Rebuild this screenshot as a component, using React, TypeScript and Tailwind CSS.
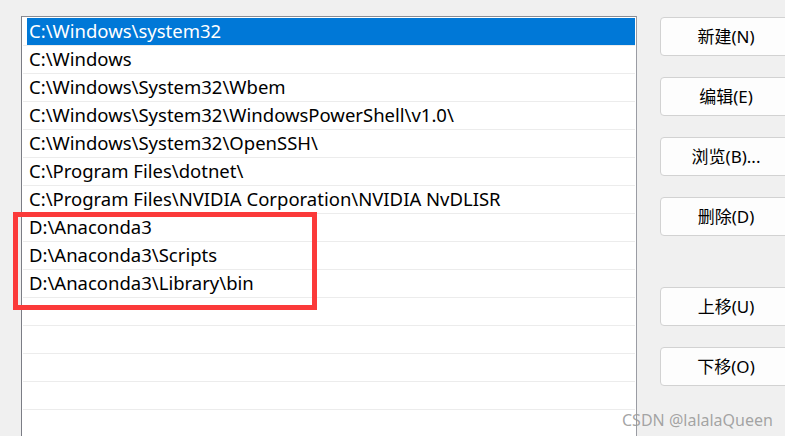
const paths = [
  "C:\\Windows\\system32",
  "C:\\Windows",
  "C:\\Windows\\System32\\Wbem",
  "C:\\Windows\\System32\\WindowsPowerShell\\v1.0\\",
  "C:\\Windows\\System32\\OpenSSH\\",
  "C:\\Program Files\\dotnet\\",
  "C:\\Program Files\\NVIDIA Corporation\\NVIDIA NvDLISR",
  "D:\\Anaconda3",
  "D:\\Anaconda3\\Scripts",
  "D:\\Anaconda3\\Library\\bin",
  "",
  "",
  "",
  "",
  "",
];

const buttons = [
  { label: "新建(N)", gap: false },
  { label: "编辑(E)", gap: false },
  { label: "浏览(B)...", gap: false },
  { label: "删除(D)", gap: false },
  { label: "上移(U)", gap: true },
  { label: "下移(O)", gap: false },
];

export default function App() {
  return (
    <div
      className="relative flex h-[436px] w-[785px] overflow-hidden bg-[#f0f0f0] text-black"
      style={{ fontFamily: '"Noto Sans", "Noto Sans CJK SC", sans-serif' }}
    >
      <div className="ml-[21px] mt-[16px] h-[440px] w-[616px] shrink-0 border border-r-[#9a9ca3] border-l-[#7b7d85] border-t-[#8a8c93] border-b-[#8a8c93] bg-white px-px pt-px">
        {paths.map((p, i) => (
          <div key={i} className="h-[28px] border-b border-[#ececec]">
            {i === 0 ? (
              <div className="ml-[4px] flex h-[27px] items-center bg-[#0078d7] pl-[2px] text-[18.5px] leading-none text-white">
                {p}
              </div>
            ) : (
              <div className="flex h-[27px] items-center pl-[6px] text-[18.5px] leading-none">
                {p}
              </div>
            )}
          </div>
        ))}
      </div>

      <div className="ml-[23px] mt-[17px] flex shrink-0 flex-col">
        {buttons.map((b) => (
          <div
            key={b.label}
            className={`${b.gap ? "mt-[51px]" : "mt-[21px]"} first:mt-0 flex h-[39px] w-[132px] items-center justify-center rounded-[4px] border border-[#d2d2d2] bg-[#fdfdfd] text-[17px]`}
          >
            {b.label}
          </div>
        ))}
      </div>

      <div className="pointer-events-none absolute left-[13px] top-[212px] h-[98px] w-[304px] border-[5px] border-[#fb3a3a]" />

      <div className="pointer-events-none absolute left-[622px] top-[408px] text-[16px] text-[#9a9a9a]/90">
        CSDN @lalalaQueen
      </div>
    </div>
  );
}
